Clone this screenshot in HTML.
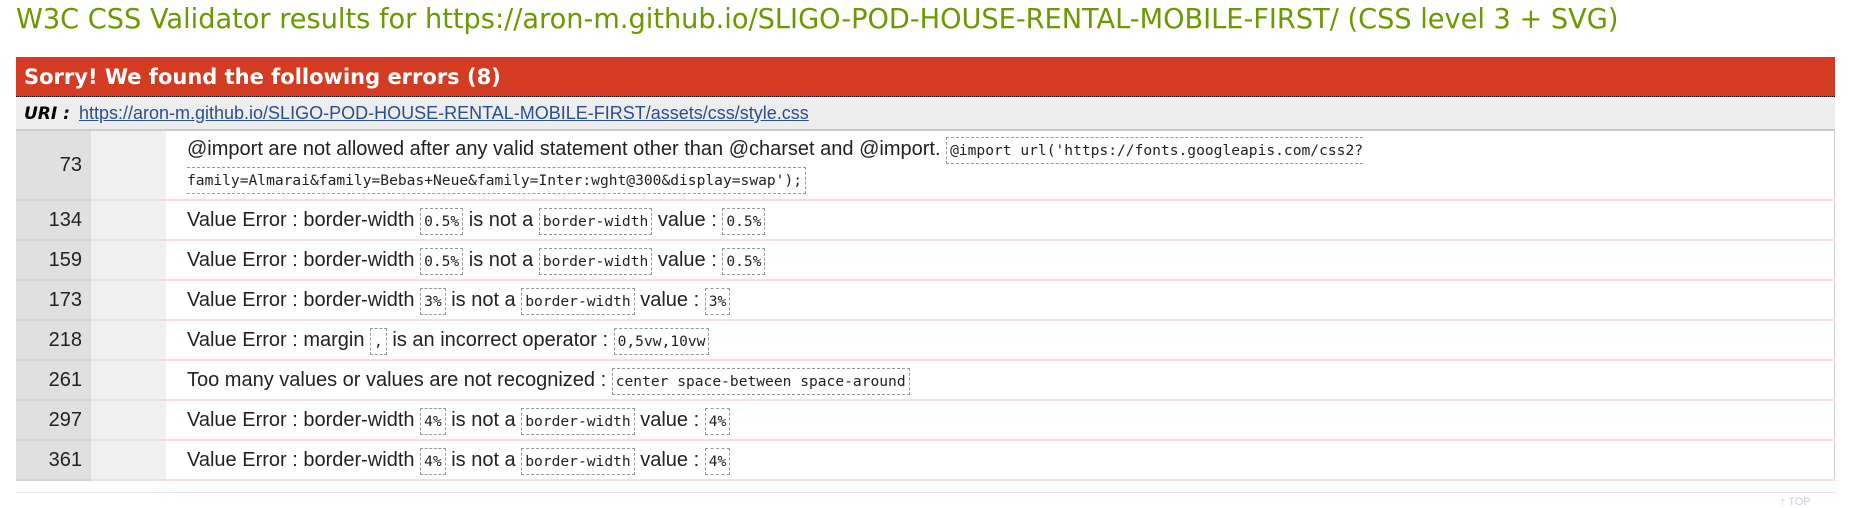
<!DOCTYPE html>
<html><head><meta charset="utf-8"><style>
body{margin:0;background:#fff;width:1861px;height:502px;overflow:hidden;font-family:"Liberation Sans",Arial,sans-serif;}
h2{position:absolute;left:16px;top:0;margin:0;font-family:"DejaVu Sans",Verdana,sans-serif;font-weight:normal;font-size:27.2px;line-height:40px;color:#6a9a00;white-space:nowrap;}
.box{position:absolute;left:16px;top:57px;width:1819px;}
.hd{background:#d33c23;color:#fff;font-weight:bold;font-family:"DejaVu Sans",Verdana,sans-serif;font-size:21px;height:39px;line-height:40px;padding-left:8px;border-bottom:1px dotted #000;}
.uri{background:#ededed;height:32px;line-height:32px;padding-left:8px;font-size:18px;border-bottom:2px solid #ccc;}
.uri b{font-style:italic;margin-right:4px;font-family:"DejaVu Sans",Verdana,sans-serif;font-size:17px;}
.uri a{color:#2a4f8f;text-decoration:underline;}
table{border-collapse:collapse;width:1819px;border-right:1px solid #ccc;}
td{padding:0;font-size:20px;color:#222;}
td.n{width:75px;background:#e0e0e0;text-align:right;padding-right:9px;box-sizing:border-box;border-bottom:2px solid #d4d4d4;}
td.g{width:75px;background:#f0f0f0;border-bottom:2px solid #e4e4e4;}
td.m{padding-left:21px;border-bottom:2px solid #fddede;}
tr{height:40px;}
tr.f td.m{line-height:28px;padding-top:4px;padding-bottom:4px;}
code{font-family:"DejaVu Sans Mono","Liberation Mono",monospace;font-size:14.6px;border:1px dashed #999;padding:4px 3px;color:#222;}
.foot{position:absolute;left:16px;top:492px;width:1819px;border-top:1px solid #e6e6ef;}
.top{position:absolute;left:1780px;top:496px;font-size:11px;color:#ccd;}
</style></head><body>
<h2>W3C CSS Validator results for https://aron-m.github.io/SLIGO-POD-HOUSE-RENTAL-MOBILE-FIRST/ (CSS level 3 + SVG)</h2>
<div class="box">
<div class="hd">Sorry! We found the following errors (8)</div>
<div class="uri"><b>URI :</b> <a>https://aron-m.github.io/SLIGO-POD-HOUSE-RENTAL-MOBILE-FIRST/assets/css/style.css</a></div>
<table>
<tr class="f" style="height:66px"><td class="n">73</td><td class="g"></td><td class="m">@import are not allowed after any valid statement other than @charset and @import. <code>@import url('https://fonts.googleapis.com/css2?<br>family=Almarai&amp;family=Bebas+Neue&amp;family=Inter:wght@300&amp;display=swap');</code></td></tr>
<tr><td class="n">134</td><td class="g"></td><td class="m">Value Error : border-width <code>0.5%</code> is not a <code>border-width</code> value : <code>0.5%</code></td></tr>
<tr><td class="n">159</td><td class="g"></td><td class="m">Value Error : border-width <code>0.5%</code> is not a <code>border-width</code> value : <code>0.5%</code></td></tr>
<tr><td class="n">173</td><td class="g"></td><td class="m">Value Error : border-width <code>3%</code> is not a <code>border-width</code> value : <code>3%</code></td></tr>
<tr><td class="n">218</td><td class="g"></td><td class="m">Value Error : margin <code>,</code> is an incorrect operator : <code>0,5vw,10vw</code></td></tr>
<tr><td class="n">261</td><td class="g"></td><td class="m">Too many values or values are not recognized : <code>center space-between space-around</code></td></tr>
<tr><td class="n">297</td><td class="g"></td><td class="m">Value Error : border-width <code>4%</code> is not a <code>border-width</code> value : <code>4%</code></td></tr>
<tr><td class="n">361</td><td class="g"></td><td class="m">Value Error : border-width <code>4%</code> is not a <code>border-width</code> value : <code>4%</code></td></tr>
</table>
</div>
<div class="foot"></div>
<div class="top">↑ TOP</div>
</body></html>
